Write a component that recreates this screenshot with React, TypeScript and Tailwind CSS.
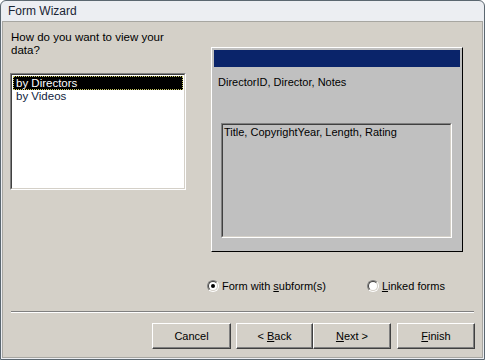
import type { ReactNode } from 'react';

// ── Form Wizard dialog ─────────────────────────

function Button({ children, className = '' }: { children: ReactNode; className?: string }) {
  return (
    <div
      className={`h-[26px] flex items-center justify-center border border-t-white border-l-white border-r-[#404040] border-b-[#404040] shadow-[inset_-1px_-1px_0_#808080] text-[#000] ${className}`}
    >
      {children}
    </div>
  );
}

function Radio({ checked }: { checked?: boolean }) {
  return (
    <div className="w-[12px] h-[12px] rounded-full border border-t-[#808080] border-l-[#808080] border-b-white border-r-white flex items-center justify-center">
      <div className="w-[10px] h-[10px] rounded-full bg-white border border-t-[#404040] border-l-[#404040] border-b-[#d4d0c8] border-r-[#d4d0c8] flex items-center justify-center">
        {checked && <div className="w-[4px] h-[4px] rounded-full bg-black" />}
      </div>
    </div>
  );
}

export default function App() {
  return (
    <div className="w-[486px] h-[360px] bg-white font-['Liberation_Sans',Arial,sans-serif] text-[11px] text-black">
      <div className="w-[485px] h-[360px] flex flex-col border border-[#5b6770] rounded-t-[6px] overflow-hidden bg-[#eceef2]">
        {/* title bar */}
        <div className="h-[20px] flex items-center pl-[7px] text-[#1a2535] text-[12px]">Form Wizard</div>

        {/* body */}
        <div className="flex-1 mx-[1px] mb-[1px] border border-[#a7a6a1] bg-[#d4d0c8] flex flex-col">
          <div className="flex pt-[9px]">
            {/* left column */}
            <div className="w-[208px] flex flex-col">
              <div className="ml-[8px] leading-[13px] text-[11.5px]">
                How do you want to view your
                <br />
                data?
              </div>
              <div className="ml-[7px] mt-[16px] w-[176px] h-[117px] border border-t-[#808080] border-l-[#808080] border-b-white border-r-white">
                <div className="w-full h-full border border-t-[#404040] border-l-[#404040] border-b-[#d4d0c8] border-r-[#d4d0c8] bg-white p-[1px] text-[11.5px]">
                  <div className="h-[14px] leading-[12px] bg-black text-white pl-[2px] border border-dotted border-[#c8c864]">
                    by Directors
                  </div>
                  <div className="h-[13px] leading-[13px] pl-[3px] text-[#101c40]">by Videos</div>
                </div>
              </div>
            </div>

            {/* preview */}
            <div className="mt-[16px] w-[252px] h-[205px] border border-t-white border-l-white border-b-black border-r-black bg-[#c0c0c0] flex flex-col">
              <div className="mx-[2px] mt-[2px] h-[17px] bg-[#0a246a]" />
              <div className="pl-[6px] mt-[9px] leading-[13px]">DirectorID, Director, Notes</div>
              <div className="ml-[9px] mt-[34px] w-[231px] h-[115px] border border-t-[#808080] border-l-[#808080] border-b-white border-r-white">
                <div className="w-full h-full border border-t-[#404040] border-l-[#404040] border-b-[#d4d0c8] border-r-[#d4d0c8] pl-[1px] pt-[1px] leading-[13px]">
                  Title, CopyrightYear, Length, Rating
                </div>
              </div>
            </div>
          </div>

          {/* radio options */}
          <div className="flex items-center h-[14px] mt-[27px] pl-[204px]">
            <Radio checked />
            <span className="ml-[3px]">
              Form with <span className="underline">s</span>ubform(s)
            </span>
            <div className="ml-[41px]">
              <Radio />
            </div>
            <span className="ml-[3px]">
              <span className="underline">L</span>inked forms
            </span>
          </div>

          {/* separator */}
          <div className="mx-[8px] mt-[18px] h-[2px] border-t border-t-[#808080] border-b border-b-white" />

          {/* buttons */}
          <div className="flex mt-[10px] pl-[149px]">
            <Button className="w-[79px]">Cancel</Button>
            <Button className="ml-[5px] w-[77px]">
              &lt; <span className="underline ml-[3px]">B</span>ack
            </Button>
            <Button className="w-[78px]">
              <span className="underline">N</span>ext &gt;
            </Button>
            <Button className="ml-[6px] w-[78px]">
              <span className="underline">F</span>inish
            </Button>
          </div>
        </div>
      </div>
    </div>
  );
}
